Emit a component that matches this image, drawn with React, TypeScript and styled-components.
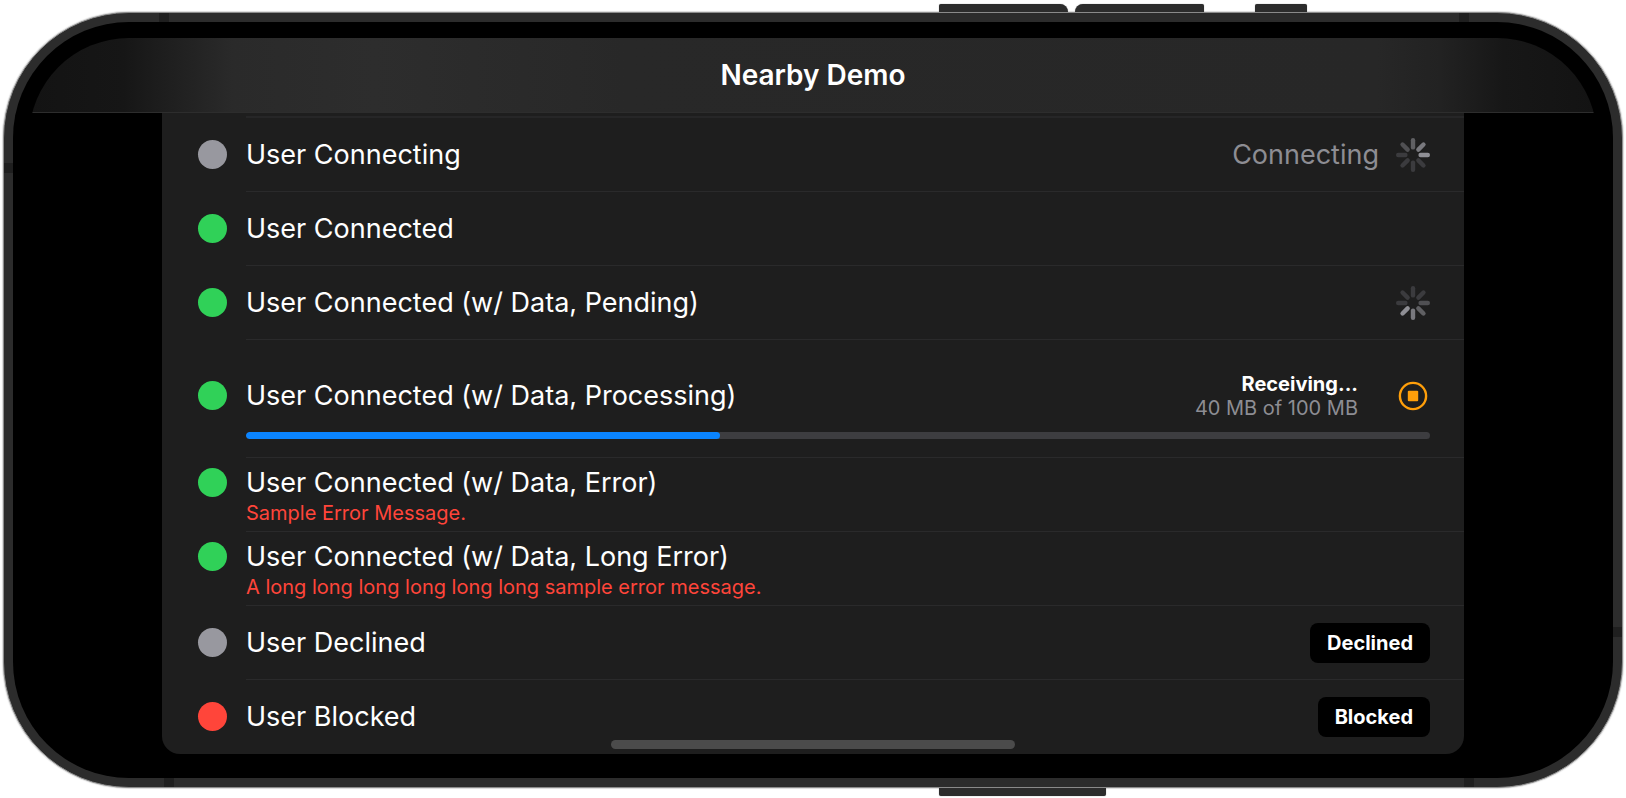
import React from "react";
import styled, { createGlobalStyle } from "styled-components";

const colors = {
  green: "#30d158",
  gray: "#98989f",
  red: "#ff453a",
  orange: "#ff9f0a",
  blue: "#0a84ff",
  panel: "#1e1e1e",
  frame: "#2c2c2c",
  separator: "#2a2a2b",
};

const GlobalStyle = createGlobalStyle`
  * { box-sizing: border-box; }
  body {
    margin: 0;
    background: #fff;
    color: #fff;
    font-family: Inter, "Liberation Sans", sans-serif;
  }
`;

const Stage = styled.div`
  padding: 12px 3px 10px;
`;

const Phone = styled.div`
  position: relative;
  padding: 9px;
  background: ${colors.frame};
  border: 1px solid #8c8c8c;
  border-radius: 126px;
  box-shadow: 0 0 1px 1px rgba(0, 0, 0, 0.15);
`;

const Bezel = styled.div`
  padding: 16px;
  background: #000;
  border-radius: 116px;
`;

const Screen = styled.div`
  position: relative;
  overflow: hidden;
  padding-bottom: 8px;
  background: #000;
  border-radius: 100px;
`;

type Edge = "top" | "bottom" | "left" | "right";

const SideKey = styled.span<{ $edge: "top" | "bottom"; $left: string; $width: number; $radius?: string }>`
  position: absolute;
  ${(p) => p.$edge}: -9px;
  left: ${(p) => p.$left};
  width: ${(p) => p.$width}px;
  height: 8px;
  background: ${colors.frame};
  border-radius: ${(p) => p.$radius ?? "2px 2px 0 0"};
  box-shadow: 0 0 1px 0 #777;
`;

const Antenna = styled.span<{ $edge: Edge; $at: string }>`
  position: absolute;
  ${(p) => p.$edge}: 0;
  ${(p) => (p.$edge === "top" || p.$edge === "bottom" ? "left" : "top")}: ${(p) => p.$at};
  width: ${(p) => (p.$edge === "top" || p.$edge === "bottom" ? 10 : 9)}px;
  height: ${(p) => (p.$edge === "top" || p.$edge === "bottom" ? 9 : 10)}px;
  background: #1f1f1f;
`;

const NavBar = styled.header`
  display: flex;
  align-items: center;
  justify-content: center;
  height: 75px;
  border-bottom: 1px solid #2d2d2d;
  background: linear-gradient(
    90deg,
    #131313 0%,
    #161616 6%,
    #1f1f1f 9%,
    #2a2a2a 13%,
    #2d2d2d 22%,
    #282828 38%,
    #272727 86%,
    #222 90%,
    #171717 94%,
    #131313 100%
  );
`;

const Title = styled.h1`
  margin: 0;
  font-size: 28px;
  line-height: 34px;
  font-weight: 600;
`;

const Panel = styled.main`
  margin: 0 133px;
  padding-top: 3px;
  background: ${colors.panel};
  border-radius: 0 0 18px 18px;
`;

const Divider = styled.hr`
  height: 2px;
  margin: 0 0 0 84px;
  border: 0;
  background: #262627;
`;

const List = styled.ul`
  margin: 0;
  padding: 0;
  list-style: none;
`;

const Row = styled.li`
  display: flex;
  gap: 19px;
  padding-left: 36px;
`;

const Dot = styled.span<{ $color: string; $top: number }>`
  flex: none;
  width: 29px;
  height: 29px;
  margin-top: ${(p) => p.$top}px;
  border-radius: 50%;
  background: ${(p) => p.$color};
`;

const Body = styled.div<{ $top: number; $last?: boolean }>`
  flex: 1;
  min-width: 0;
  min-height: 74px;
  padding: ${(p) => p.$top}px 34px 0 0;
  border-bottom: ${(p) => (p.$last ? "0" : `1px solid ${colors.separator}`)};
`;

const Line = styled.div`
  display: flex;
  align-items: center;
  justify-content: space-between;
  height: 40px;
`;

const Name = styled.span`
  font-size: 27px;
  line-height: 34px;
`;

const Trailing = styled.div<{ $gap: number }>`
  display: flex;
  align-items: center;
  gap: ${(p) => p.$gap}px;
`;

const State = styled.span`
  color: #8d8d93;
  font-size: 27px;
  line-height: 34px;
`;

const Transfer = styled.div`
  text-align: right;
  font-size: 20px;
  line-height: 24px;
  color: #8d8d93;
  strong {
    display: block;
    color: #fff;
    font-weight: 700;
  }
`;

const ErrorText = styled.p`
  margin: 0;
  color: ${colors.red};
  font-size: 20px;
  line-height: 20px;
`;

const Pill = styled.button`
  height: 40px;
  padding: 0 17px;
  border: 0;
  border-radius: 8px;
  background: #000;
  color: #fff;
  font: 700 20px/24px Inter, "Liberation Sans", sans-serif;
`;

const StopButton = styled.button`
  display: flex;
  padding: 2px;
  border: 0;
  background: none;
`;

const Progress = styled.progress`
  display: block;
  appearance: none;
  width: 100%;
  height: 7px;
  margin: 16px 0 18px;
  border: 0;
  border-radius: 4px;
  overflow: hidden;
  background: #3d3d40;
  &::-webkit-progress-bar {
    background: #3d3d40;
  }
  &::-webkit-progress-value {
    background: ${colors.blue};
    border-radius: 4px;
  }
`;

const HomeIndicator = styled.span`
  position: absolute;
  left: 50%;
  bottom: 13px;
  width: 404px;
  height: 9px;
  transform: translateX(-50%);
  border-radius: 5px;
  background: #4b4b4b;
`;

const REST = "#3b3b3e";

/* Eight spokes, listed clockwise from the top. */
function Spinner({ spokes }: { spokes: string[] }) {
  return (
    <svg width="34" height="34" viewBox="0 0 34 34" role="img" aria-label="In progress">
      {spokes.map((color, i) => (
        <rect
          key={i}
          x="14.8"
          y="0"
          width="4.4"
          height="11.6"
          rx="2.2"
          fill={color}
          transform={`rotate(${i * 45} 17 17)`}
        />
      ))}
    </svg>
  );
}

function StopIcon() {
  return (
    <svg width="30" height="30" viewBox="0 0 30 30" aria-hidden="true">
      <circle cx="15" cy="15" r="13.1" fill="none" stroke={colors.orange} strokeWidth="2.4" />
      <rect x="9.8" y="9.8" width="10.4" height="10.4" rx="1" fill={colors.orange} />
    </svg>
  );
}

interface User {
  name: string;
  color: string;
  trailing?: React.ReactNode;
  error?: string;
  progress?: number;
}

const users: User[] = [
  {
    name: "User Connecting",
    color: colors.gray,
    trailing: (
      <Trailing $gap={17}>
        <State>Connecting</State>
        <Spinner spokes={["#606063", "#79797e", "#8f8f95", REST, REST, REST, REST, "#505053"]} />
      </Trailing>
    ),
  },
  { name: "User Connected", color: colors.green },
  {
    name: "User Connected (w/ Data, Pending)",
    color: colors.green,
    trailing: <Spinner spokes={[REST, REST, "#505053", "#606063", "#79797e", "#8f8f95", REST, REST]} />,
  },
  {
    name: "User Connected (w/ Data, Processing)",
    color: colors.green,
    progress: 40,
    trailing: (
      <Trailing $gap={38}>
        <Transfer>
          <strong>Receiving...</strong>
          40 MB of 100 MB
        </Transfer>
        <StopButton aria-label="Stop">
          <StopIcon />
        </StopButton>
      </Trailing>
    ),
  },
  { name: "User Connected (w/ Data, Error)", color: colors.green, error: "Sample Error Message." },
  {
    name: "User Connected (w/ Data, Long Error)",
    color: colors.green,
    error: "A long long long long long long sample error message.",
  },
  { name: "User Declined", color: colors.gray, trailing: <Pill>Declined</Pill> },
  { name: "User Blocked", color: colors.red, trailing: <Pill>Blocked</Pill> },
];

function UserRow({ user, last }: { user: User; last: boolean }) {
  const top = user.error ? 5 : user.progress !== undefined ? 36 : 17;
  return (
    <Row>
      <Dot $color={user.color} $top={top + 5} />
      <Body $top={top} $last={last}>
        <Line>
          <Name>{user.name}</Name>
          {user.trailing}
        </Line>
        {user.error && <ErrorText>{user.error}</ErrorText>}
        {user.progress !== undefined && (
          <Progress value={user.progress} max={100} aria-label="Transfer progress" />
        )}
      </Body>
    </Row>
  );
}

export default function App() {
  return (
    <>
      <GlobalStyle />
      <Stage>
        <Phone>
          <SideKey $edge="top" $left="57.8%" $width={129} $radius="2px 8px 0 0" />
          <SideKey $edge="top" $left="66.2%" $width={129} $radius="8px 2px 0 0" />
          <SideKey $edge="top" $left="77.3%" $width={52} />
          <SideKey $edge="bottom" $left="57.8%" $width={167} $radius="0 0 2px 2px" />
          <Antenna $edge="top" $at="155px" />
          <Antenna $edge="top" $at="calc(100% - 163px)" />
          <Antenna $edge="bottom" $at="160px" />
          <Antenna $edge="bottom" $at="calc(100% - 158px)" />
          <Antenna $edge="left" $at="150px" />
          <Antenna $edge="right" $at="calc(100% - 160px)" />
          <Bezel>
            <Screen>
              <NavBar>
                <Title>Nearby Demo</Title>
              </NavBar>
              <Panel>
                <Divider />
                <List>
                  {users.map((user, i) => (
                    <UserRow key={user.name} user={user} last={i === users.length - 1} />
                  ))}
                </List>
              </Panel>
              <HomeIndicator />
            </Screen>
          </Bezel>
        </Phone>
      </Stage>
    </>
  );
}
